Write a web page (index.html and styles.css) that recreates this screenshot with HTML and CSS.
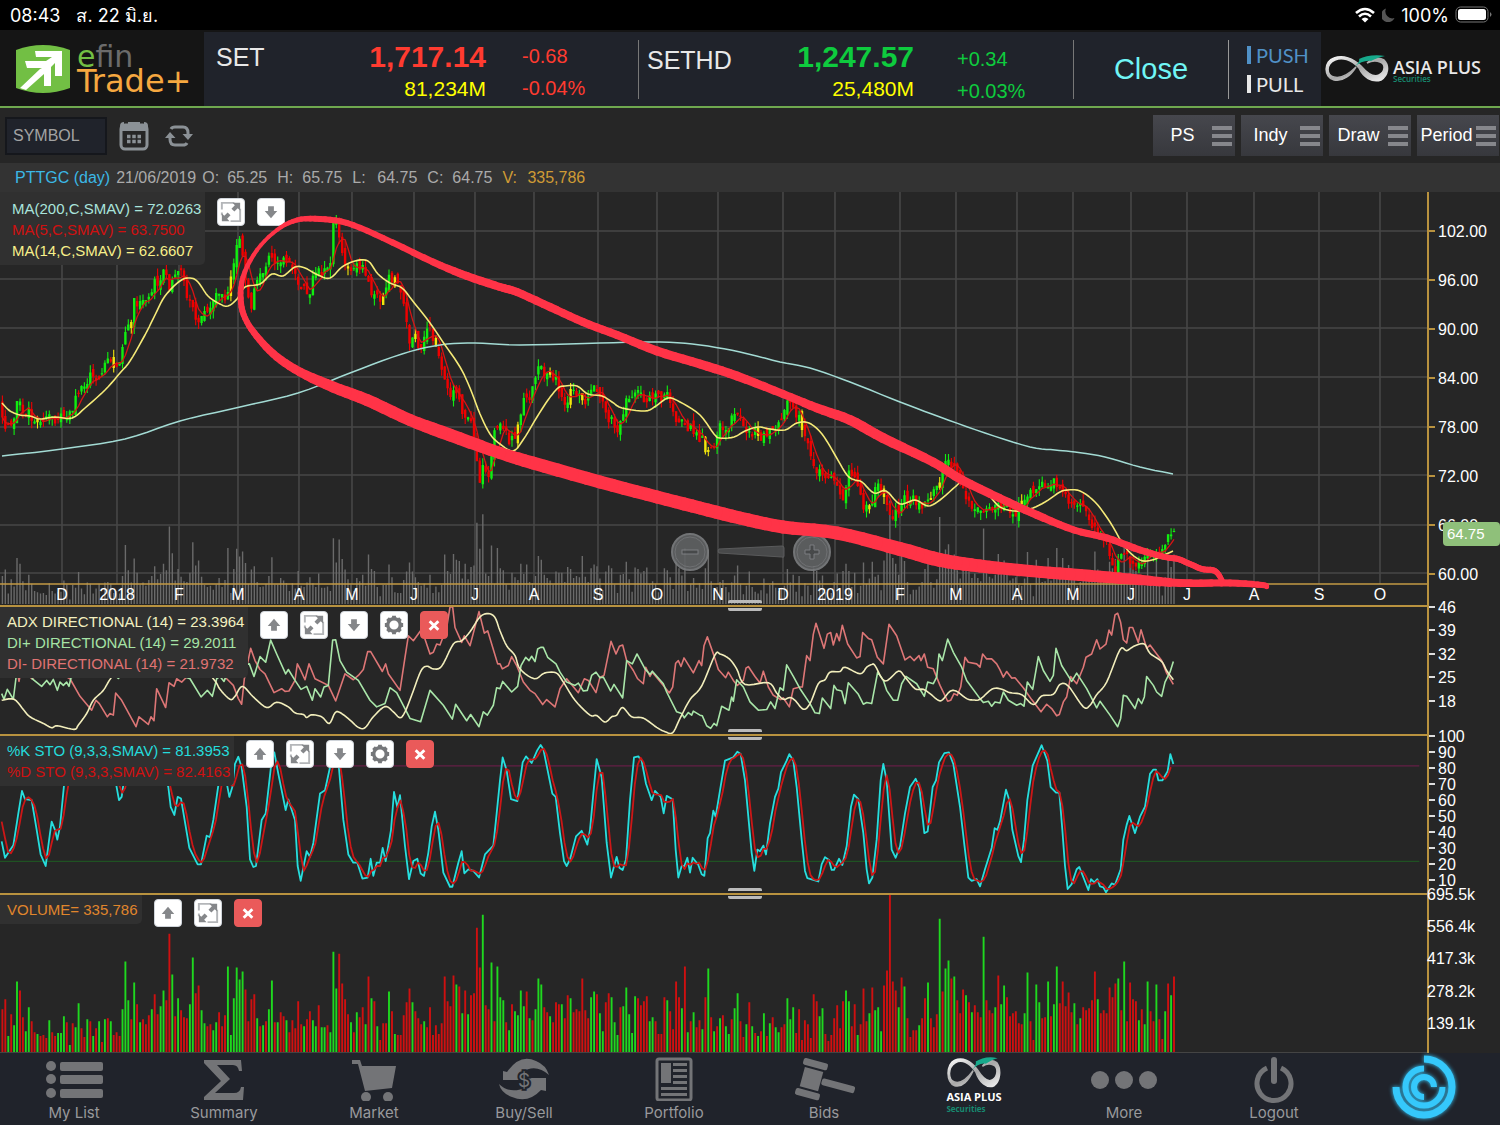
FILE: index.html
```html
<!DOCTYPE html>
<html lang="th">
<head>
  <meta charset="UTF-8">
  <meta name="viewport" content="width=device-width, initial-scale=1.0">
  <title>efin Trade+</title>
  <link rel="stylesheet" href="styles.css">
</head>
<body>
  <svg class="sprite" aria-hidden="true">
    <defs>
      <linearGradient id="silver" x1="0" y1="0" x2="1" y2="1">
        <stop offset="0" stop-color="#ffffff"/>
        <stop offset="0.5" stop-color="#a8a8a8"/>
        <stop offset="1" stop-color="#f2f2f2"/>
      </linearGradient>
    </defs>
    <symbol id="i-up" viewBox="0 0 27 27"><path d="M13.500 7L20 14.500H16.500V19.500H10.500V14.500H7z" fill="#85878a"/></symbol>
    <symbol id="i-down" viewBox="0 0 27 27"><path d="M13.500 20L20 12.500H16.500V7.500H10.500V12.500H7z" fill="#85878a"/></symbol>
    <symbol id="i-expand" viewBox="0 0 27 27">
      <path d="M4 11V4H14M23 14V23H13M4 14V17M17 4H14M23 14V10" fill="none" stroke="#b4b6b9" stroke-width="2"/>
      <path d="M23 4V12L20.500 9.500 17 13 14 10 17.500 6.500 15 4zM4 23V15L6.500 17.500 10 14 13 17 9.500 20.500 12 23z" fill="#85878a"/>
    </symbol>
    <symbol id="i-gear" viewBox="0 0 27 27">
      <circle cx="13.500" cy="13.500" r="6.500" fill="none" stroke="#75777a" stroke-width="3.500"/>
      <path d="M13.500 4V7M13.500 20V23M4 13.500H7M20 13.500H23M6.800 6.800L9 9M18 18L20.200 20.200M20.200 6.800L18 9M9 18L6.800 20.200" stroke="#75777a" stroke-width="4"/>
    </symbol>
    <symbol id="i-close" viewBox="0 0 27 27"><path d="M9 9.500L18 18.500M18 9.500L9 18.500" stroke="#fff" stroke-width="3"/></symbol>
    <symbol id="i-asia" viewBox="0 0 64 28">
      <path d="M34 13C26 4 17 2 10 5C1 9 1 20 9 22C17 24 24 19 31 12C26 20 18 27 9 25C-2 22-1 6 9 3C18 0 28 3 36 11C42 18 48 23 54 20C60 17 61 9 55 7C50 5 46 6 42 8C47 3 54 2 59 5C65 11 63 21 56 25C47 28 38 22 34 13z" fill="url(#silver)" stroke="url(#silver)" stroke-width="1.500"/>
      <path d="M29 12C33 9 35 6 34 4C40 1 50-1 60 1C54 2 50 4 46 6C41 5 35 7 29 12z" fill="#17a98b"/>
    </symbol>
  </svg>

  <div class="status-bar">
    <div class="status-left"><span>08:43</span><span class="date">ส. 22 มิ.ย.</span></div>
    <div class="status-right">
      <svg width="22" height="16" viewBox="0 0 22 16"><path d="M2 6Q11-2 20 6M5 9.500Q11 4 17 9.500" fill="none" stroke="#fff" stroke-width="2.600"/><path d="M7.500 12Q11 9 14.500 12L11 15.500z" fill="#fff"/></svg>
      <svg width="13" height="14" viewBox="0 0 13 14"><path d="M4 0.500A7 7 0 1 0 12.500 10A7 7 0 0 1 4 0.500z" fill="#555"/></svg>
      <span>100%</span>
      <svg width="37" height="18" viewBox="0 0 37 18"><rect x="1" y="1" width="32" height="15" rx="4.500" fill="none" stroke="#777"/><rect x="3" y="3" width="28" height="11" rx="2.500" fill="#fff"/><path d="M35 6Q38 8.500 35 11z" fill="#777"/></svg>
    </div>
  </div>

  <header class="top">
    <a class="brand" href="#">
      <svg width="54" height="48" viewBox="0 0 54 48">
        <path d="M0 5Q27-5 54 5V43Q27 53 0 43z" fill="#72bf44"/>
        <path d="M19 6H46V31H39V18L35 22V41H28V29L10 45L4 43L24 24L26 23H11L9 16H30L36 12H20z" fill="#fff"/>
      </svg>
      <span class="brand-name"><span><b>e</b>fin</span><em>Trade+</em></span>
    </a>
    <section class="quote down">
      <h2>SET</h2>
      <div class="price"><strong>1,717.14</strong><span>81,234M</span></div>
      <div class="change"><span>-0.68</span><span>-0.04%</span></div>
    </section>
    <section class="quote up">
      <h2>SETHD</h2>
      <div class="price"><strong>1,247.57</strong><span>25,480M</span></div>
      <div class="change"><span>+0.34</span><span>+0.03%</span></div>
    </section>
    <div class="market-state">Close</div>
    <div class="feed"><button class="push">PUSH</button><button class="pull">PULL</button></div>
    <a class="broker" href="#">
      <svg width="64" height="28"><use href="#i-asia"/></svg>
      <span class="broker-name">ASIA PLUS<small>Securities</small></span>
    </a>
  </header>

  <div class="toolbar">
    <input class="symbol" type="text" placeholder="SYMBOL" aria-label="Symbol">
    <button class="tool" aria-label="Calendar">
      <svg width="30" height="30" viewBox="0 0 30 30"><rect x="2" y="4" width="26" height="24" rx="4" fill="none" stroke="#8b9196" stroke-width="3"/><path d="M1 10V5Q1 1 5 1V5H9V1H21V5H25V1Q29 1 29 5V10z" fill="#8b9196"/><path d="M8 15.500H22M8 20.500H22" stroke="#8b9196" stroke-width="3.500" stroke-dasharray="3.500 1.750"/></svg>
    </button>
    <button class="tool" aria-label="Refresh">
      <svg width="28" height="22" viewBox="0 0 28 22"><path d="M6 4Q7 2 10 2H18Q23 2 23 8V11M22 18Q21 20 18 20H10Q5 20 5 14V11" fill="none" stroke="#8b9196" stroke-width="3"/><path d="M17.500 9H28L23 15zM0 13H10.500L5 7z" fill="#8b9196"/></svg>
    </button>
    <div class="menus">
      <button class="menu"><span>PS</span><i></i></button>
      <button class="menu"><span>Indy</span><i></i></button>
      <button class="menu"><span>Draw</span><i></i></button>
      <button class="menu"><span>Period</span><i></i></button>
    </div>
  </div>

  <div class="info">
    <span class="ticker">PTTGC (day)</span><span>21/06/2019</span>
    <span class="ohlc"><b>O:</b><span>65.25</span></span>
    <span class="ohlc"><b>H:</b><span>65.75</span></span>
    <span class="ohlc"><b>L:</b><span>64.75</span></span>
    <span class="ohlc"><b>C:</b><span>64.75</span></span>
    <span class="ohlc volume"><b>V:</b><span>335,786</span></span>
  </div>

  <main class="charts">
    <section class="panel panel-price">
      <div class="plot">
        <svg class="canvas" id="price" viewBox="0 192 1427 413" preserveAspectRatio="none"></svg>
        <div class="months" id="months"></div>
        <div class="zoom">
          <button aria-label="Zoom out"><svg width="38" height="38" viewBox="0 0 38 38"><circle cx="19" cy="19" r="18" fill="#606264" stroke="#7b7d7f" stroke-width="2"/><circle cx="19" cy="19" r="15" fill="none" stroke="#77797b"/><rect x="11" y="17" width="16" height="4" fill="#4b4d4f" stroke="#85878a"/></svg></button>
          <svg width="68" height="14" viewBox="0 0 68 14"><path d="M2 4L65 1Q67 1 67 3V11Q67 13 65 12L2 8Q0 6 2 4z" fill="#4c4d4e" stroke="#606162"/></svg>
          <button aria-label="Zoom in"><svg width="38" height="38" viewBox="0 0 38 38"><circle cx="19" cy="19" r="18" fill="#606264" stroke="#7b7d7f" stroke-width="2"/><circle cx="19" cy="19" r="15" fill="none" stroke="#77797b"/><path d="M17 12H21V17H26V21H21V26H17V21H12V17H17z" fill="#4b4d4f" stroke="#85878a"/></svg></button>
        </div>
        <svg class="canvas marker" id="marker" viewBox="0 192 1427 413" preserveAspectRatio="none"></svg>
        <div class="panel-head">
          <ul class="legend wide"><li class="c-ma200">MA(200,C,SMAV) = 72.0263</li><li class="c-red">MA(5,C,SMAV) = 63.7500</li><li class="c-ma14">MA(14,C,SMAV) = 62.6607</li></ul>
          <button aria-label="Expand"><svg><use href="#i-expand"/></svg></button>
          <button aria-label="Move down"><svg><use href="#i-down"/></svg></button>
        </div>
        <button class="grip" aria-label="Resize"></button>
      </div>
      <div class="scale" id="scale-price"></div>
    </section>

    <section class="panel panel-adx">
      <div class="plot">
        <svg class="canvas" id="adx" viewBox="0 18 4281 384" preserveAspectRatio="none"></svg>
        <div class="panel-head">
          <ul class="legend"><li class="c-adx">ADX DIRECTIONAL (14) = 23.3964</li><li class="c-plus">DI+ DIRECTIONAL (14) = 29.2011</li><li class="c-minus">DI- DIRECTIONAL (14) = 21.9732</li></ul>
          <button aria-label="Move up"><svg><use href="#i-up"/></svg></button>
          <button aria-label="Expand"><svg><use href="#i-expand"/></svg></button>
          <button aria-label="Move down"><svg><use href="#i-down"/></svg></button>
          <button aria-label="Settings"><svg><use href="#i-gear"/></svg></button>
          <button class="close" aria-label="Close"><svg><use href="#i-close"/></svg></button>
        </div>
        <button class="grip" aria-label="Resize"></button>
      </div>
      <div class="scale" id="scale-adx"></div>
    </section>

    <section class="panel panel-sto">
      <div class="plot">
        <svg class="canvas" id="sto" viewBox="0 405 4281 477" preserveAspectRatio="none"></svg>
        <div class="panel-head">
          <ul class="legend"><li class="c-cyan">%K STO (9,3,3,SMAV) = 81.3953</li><li class="c-red">%D STO (9,3,3,SMAV) = 82.4163</li></ul>
          <button aria-label="Move up"><svg><use href="#i-up"/></svg></button>
          <button aria-label="Expand"><svg><use href="#i-expand"/></svg></button>
          <button aria-label="Move down"><svg><use href="#i-down"/></svg></button>
          <button aria-label="Settings"><svg><use href="#i-gear"/></svg></button>
          <button class="close" aria-label="Close"><svg><use href="#i-close"/></svg></button>
        </div>
        <button class="grip" aria-label="Resize"></button>
      </div>
      <div class="scale" id="scale-sto"></div>
    </section>

    <section class="panel panel-volume">
      <div class="plot">
        <svg class="canvas" id="volume" viewBox="0 0 1427 158" preserveAspectRatio="none"></svg>
        <div class="panel-head">
          <ul class="legend"><li class="c-orange">VOLUME= 335,786</li></ul>
          <button aria-label="Move up"><svg><use href="#i-up"/></svg></button>
          <button aria-label="Expand"><svg><use href="#i-expand"/></svg></button>
          <button class="close" aria-label="Close"><svg><use href="#i-close"/></svg></button>
        </div>
      </div>
      <div class="scale flush" id="scale-volume"></div>
    </section>
  </main>

  <nav class="tabs">
    <a href="#">
      <svg width="58" height="44" viewBox="0 0 58 44" fill="#737477"><circle cx="6" cy="9" r="5"/><circle cx="6" cy="22" r="5"/><circle cx="6" cy="36" r="5"/><rect x="15" y="5" width="43" height="9" rx="2"/><rect x="15" y="18" width="43" height="9" rx="2"/><rect x="15" y="32" width="43" height="9" rx="2"/></svg>
      <span>My List</span>
    </a>
    <a href="#">
      <svg width="42" height="44" viewBox="0 0 42 44"><path d="M1 3H38L39 14H36Q35 8 30 8H14L27 22L12 36H31Q37 36 38 30H41L40 43H1V40L18 24L1 6z" fill="#737477"/></svg>
      <span>Summary</span>
    </a>
    <a href="#">
      <svg width="46" height="44" viewBox="0 0 46 44" fill="#737477"><path d="M1 3H9L11 9H45L41 31L14 34L7 7H1z"/><circle cx="15" cy="40" r="5"/><circle cx="37" cy="40" r="5"/></svg>
      <span>Market</span>
    </a>
    <a href="#">
      <svg width="52" height="44" viewBox="0 0 52 44" fill="#737477"><path d="M5 14L9 15Q22-4 38 4Q48 8 51 18Q38 6 24 15L27 23H5z"/><path d="M1 27Q12 38 29 30L26 21H48V34L43 33Q30 47 14 40Q3 36 1 27z"/><text x="26" y="30" text-anchor="middle" class="dollar">$</text></svg>
      <span>Buy/Sell</span>
    </a>
    <a href="#">
      <svg width="38" height="44" viewBox="0 0 38 44"><rect x="2" y="2" width="34" height="41" rx="2" fill="none" stroke="#737477" stroke-width="3"/><rect x="6" y="6" width="10" height="20" fill="#737477"/><path d="M18 7.500H32M18 13.500H32M18 19.500H32M18 25.500H32M6 31.500H32M6 37.500H32" stroke="#737477" stroke-width="3"/></svg>
      <span>Portfolio</span>
    </a>
    <a href="#">
      <svg width="62" height="44" viewBox="0 0 62 44" fill="#737477"><g transform="rotate(15 18 22)"><rect x="6" y="3" width="25" height="7" rx="2"/><rect x="9" y="12" width="19" height="20"/><rect x="6" y="34" width="25" height="7" rx="2"/><rect x="29" y="18" width="34" height="7" rx="2"/></g></svg>
      <span>Bids</span>
    </a>
    <a class="asia" href="#">
      <svg width="54" height="32" viewBox="0 0 64 28" preserveAspectRatio="none"><use href="#i-asia" width="64" height="28"/></svg>
      <strong>ASIA PLUS<small>Securities</small></strong>
    </a>
    <a href="#">
      <svg width="66" height="44" viewBox="0 0 66 44" fill="#737477"><circle cx="9" cy="23" r="9"/><circle cx="33" cy="23" r="9"/><circle cx="57" cy="23" r="9"/></svg>
      <span>More</span>
    </a>
    <a href="#">
      <svg width="40" height="46" viewBox="0 0 40 46" fill="none" stroke="#737477"><path d="M13 11A17 17 0 1 0 27 11" stroke-width="5"/><path d="M20 3V24" stroke-width="6" stroke-linecap="round"/></svg>
      <span>Logout</span>
    </a>
    <a class="orb" href="#" aria-label="Assistant">
      <svg width="66" height="66" viewBox="0 0 66 66" fill="none" stroke="#35c8fb"><path d="M33 5A28 28 0 1 1 5 33" stroke-width="7"/><path d="M33 14.500A18.500 18.500 0 1 0 51.500 33" stroke-width="6"/><path d="M43 33A10 10 0 1 0 33 43" stroke-width="6"/></svg>
    </a>
  </nav>

  <script src="chart.js"></script>
</body>
</html>
```
FILE: styles.css
```css
* {
  box-sizing: border-box;
}

body {
  margin: 0;
  min-height: 100vh;
  display: flex;
  flex-direction: column;
  background: #262626;
  color: #e8e8e8;
  font-family: "Liberation Sans", Arial, sans-serif;
  font-size: 16px;
}

button {
  padding: 0;
  border: 0;
  background: none;
  color: inherit;
  font: inherit;
  cursor: pointer;
}

a {
  color: inherit;
  text-decoration: none;
}

svg {
  display: block;
}

.sprite {
  position: absolute;
  width: 0;
  height: 0;
}

/* status bar */
.status-bar {
  display: flex;
  justify-content: space-between;
  align-items: center;
  height: 30px;
  padding: 0 8px 0 10px;
  background: #000;
  color: #fff;
  font-family: Inter, "Noto Sans", sans-serif;
  font-size: 18px;
}

.status-left {
  display: flex;
  align-items: center;
  gap: 16px;
}

.date {
  font-size: 18px;
}

.status-right {
  display: flex;
  align-items: center;
  gap: 6px;
}

/* header */
.top {
  display: grid;
  grid-template-columns: 204px 1fr 1fr 155px 92px 179px;
  grid-template-rows: 100%;
  height: 78px;
  border-top: 2px solid #151515;
  border-bottom: 2px solid #6fa84f;
  background: #20232b;
}

.brand {
  display: flex;
  align-items: center;
  gap: 7px;
  padding-left: 16px;
  background: #151515;
}

.brand-name {
  display: flex;
  flex-direction: column;
  font-family: "DejaVu Sans", sans-serif;
  font-size: 30px;
  line-height: 24px;
  color: #6b6b6b;
}

.brand-name b {
  color: #72bf44;
  font-weight: 400;
}

.brand-name em {
  color: #f6a840;
  font-size: 32px;
  font-style: normal;
}

.quote {
  display: grid;
  grid-template-columns: 1fr auto 116px;
  column-gap: 36px;
  margin: 8px 0 7px;
  padding-left: 12px;
  border-right: 1px solid #777;
}

.quote.up {
  padding-left: 8px;
  column-gap: 43px;
}

.quote h2 {
  margin: 0;
  font-size: 25px;
  line-height: 34px;
  font-weight: 400;
}

.price {
  display: flex;
  flex-direction: column;
  align-items: flex-end;
  color: #ff0;
  font-size: 21px;
  line-height: 30px;
}

.price strong {
  font-size: 30px;
  line-height: 34px;
}

.change {
  display: flex;
  flex-direction: column;
  font-size: 20px;
  line-height: 32px;
}

.up h2,
.up .change {
  padding-top: 3px;
}

.down .change,
.down strong {
  color: #ff3b30;
}

.up .change,
.up strong {
  color: #0ecb3e;
}

.market-state {
  display: flex;
  align-items: center;
  justify-content: center;
  margin: 8px 0 7px;
  border-right: 1px solid #999;
  color: #70f5f5;
  font-size: 29px;
}

.feed {
  display: flex;
  flex-direction: column;
  align-items: flex-start;
  justify-content: center;
  gap: 11px;
  padding-left: 18px;
  font-family: Lato, sans-serif;
  font-size: 20px;
  line-height: 18px;
}

.feed button {
  padding-left: 5px;
  border-left: 4px solid;
}

.push {
  color: #5091c7;
}

.broker {
  display: flex;
  align-items: center;
  gap: 4px;
  padding-left: 4px;
  background: #151515;
}

.broker-name {
  padding-top: 4px;
  font-family: "Open Sans", sans-serif;
  font-size: 18px;
  font-weight: 600;
  line-height: 16px;
  white-space: nowrap;
}

small {
  display: block;
  color: #178a70;
  font-size: 8px;
  line-height: 8px;
}

/* toolbar */
.toolbar {
  display: flex;
  align-items: center;
  gap: 12px;
  height: 55px;
  padding: 0 1px 0 5px;
  background: #262626;
}

.symbol {
  width: 102px;
  height: 38px;
  padding: 0 6px;
  border: 2px solid #15171c;
  background: #20232b;
  color: #ccc;
  font: 16px "Liberation Sans", Arial, sans-serif;
}

.symbol::placeholder {
  color: #a3a3a3;
}

.tool {
  margin-right: 4px;
}

.menus {
  display: flex;
  gap: 6px;
  margin-left: auto;
}

.menu {
  display: flex;
  align-items: center;
  width: 82px;
  height: 41px;
  padding-right: 3px;
  background: linear-gradient(#46474d, #37383d);
  color: #fff;
  font-size: 18px;
}

.menu span {
  flex: 1;
}

.menu i {
  width: 20px;
  height: 20px;
  background: repeating-linear-gradient(#86878c 0 4px, transparent 4px 8px);
}

.info {
  display: flex;
  align-items: center;
  gap: 6px;
  height: 29px;
  padding-left: 15px;
  background: #333;
  color: #aaa;
}

.ohlc {
  display: flex;
  gap: 9px;
  margin-right: 4px;
}

.ohlc b {
  width: 16px;
  font-weight: 400;
}

.ticker {
  color: #3bb8e6;
}

.volume {
  color: #cf9b35;
}

/* charts */
.charts {
  flex: 1;
  display: flex;
  flex-direction: column;
}

.panel {
  display: flex;
  min-height: 80px;
}

.panel-price {
  flex: 415 1 0;
}

.panel-adx {
  flex: 129 1 0;
}

.panel-sto {
  flex: 159 1 0;
}

.panel-volume {
  flex: 158 1 0;
}

.plot {
  position: relative;
  flex: 1;
  border-bottom: 2px solid #b8923f;
}

.panel-volume .plot {
  border-bottom-color: #444;
  border-bottom-width: 1px;
}

.canvas {
  position: absolute;
  inset: 0;
  width: 100%;
  height: 100%;
}

.canvas path {
  vector-effect: non-scaling-stroke;
}

.marker {
  overflow: visible;
  z-index: 1;
  pointer-events: none;
}

.panel-head {
  position: absolute;
  top: 0;
  left: 0;
  display: flex;
  align-items: flex-start;
  gap: 12px;
}

.panel-head button {
  width: 28px;
  height: 28px;
  margin-top: 4px;
  border-radius: 4px;
  background: #fff;
  border: 1px solid #cfd4da;
}

.panel-head button svg {
  width: 26px;
  height: 26px;
}

.panel-head .close {
  background: #ea5a5a;
  border-color: #ea5a5a;
}

.legend {
  margin: 0;
  padding: 4px 4px 4px 7px;
  border-radius: 0 0 5px 0;
  background: #303030;
  font-size: 15px;
  line-height: 21px;
  list-style: none;
}

.legend.wide {
  padding: 6px 4px 4px 12px;
}

.legend.wide ~ button {
  margin-top: 6px;
}

.c-ma200 { color: #a9e4dc; }
.c-ma14 { color: #f7ef8a; }
.c-red { color: #d01010; }
.c-adx { color: #f3f0c0; }
.c-plus { color: #a6e3a6; }
.c-minus { color: #e07373; }
.c-cyan { color: #25dcdc; }
.c-orange { color: #e0862c; }

.months {
  position: absolute;
  left: 0;
  right: 0;
  bottom: 0;
  height: 20px;
  line-height: 20px;
  color: #fff;
}

.months span {
  position: absolute;
  transform: translateX(-50%);
}

.zoom {
  position: absolute;
  left: 47%;
  bottom: 34px;
  display: flex;
  align-items: center;
  gap: 8px;
  opacity: 0.9;
}

.grip {
  position: absolute;
  left: 51%;
  bottom: -6px;
  width: 34px;
  height: 11px;
  border-top: 3px solid #bbb;
  border-bottom: 3px solid #bbb;
  border-radius: 2px;
  z-index: 2;
}

.scale {
  position: relative;
  width: 73px;
  border-left: 2px solid #b8923f;
  color: #fff;
}

.scale span {
  position: absolute;
  left: 9px;
  line-height: 18px;
  transform: translateY(-50%);
}

.scale span::before {
  content: "";
  position: absolute;
  top: 7px;
  left: -9px;
  width: 6px;
  height: 2px;
  background: #ddd;
}

#scale-price span::before {
  background: #b8923f;
}

.scale.flush span {
  left: -2px;
}

.scale.flush span::before {
  display: none;
}

.scale .last {
  left: 14px;
  right: 0;
  padding-left: 4px;
  border-radius: 4px;
  background: #8fc07a;
  font-size: 15px;
  line-height: 24px;
}

.scale .last::before {
  display: none;
}

/* bottom tabs */
.tabs {
  display: grid;
  grid-template-columns: repeat(10, 1fr);
  height: 72px;
  background: #20232b;
  color: #98999c;
  font-family: Inter, sans-serif;
  font-size: 15px;
}

.tabs a {
  display: flex;
  flex-direction: column;
  align-items: center;
  justify-content: space-between;
  padding: 4px 2px 3px 0;
}

.dollar {
  font-size: 19px;
  stroke: #20232b;
  stroke-width: 4px;
  paint-order: stroke;
}

.tabs .asia {
  justify-content: flex-start;
}

.asia strong {
  color: #fff;
  font: 700 11px/16px "Open Sans", sans-serif;
}

.tabs .orb {
  padding-top: 1px;
  filter: drop-shadow(0 0 2px #35c8fb);
}
```
FILE: chart.js
```js
// [r/g][height] per trading day
const VOLUME = `r43 r53 g16 r38 g27 g71 r62 r35 g21 g45 r31 r20 g18 r16 r17 r14 g32 r20 r16 g19 g19 g36 r30 g7 r29 g25 g49 r24 r15 g33 r31 g16 r24 g31 r10 g33 r34 g31 r17 r20
r16 g43 g91 g52 r33 g70 r48 g30 r33 r28 r37 g43 r58 r38 g46 g62 r52 r119 g78 r36 g54 r42 r35 r34 g48 g95 r59 r67 g42 g29 r26 r28 g22 g30 r40 r26 r37 g86 g17 g54
g85 g73 g81 r63 r31 r53 r58 g34 r26 g27 r31 g43 g72 r30 g30 r40 r36 g32 r20 r32 r24 r51 r28 g26 r33 r41 g32 g26 r47 g25 g25 r27 g20 g101 g64 r99 r69 r53 r38 g30
r20 g40 r35 r45 g28 r76 g54 r51 g26 r12 r29 r29 g61 r41 g18 r17 r17 r37 r50 r64 g50 r41 r34 r28 g31 r25 r45 r17 r27 r18 r29 r76 r51 r46 r77 g68 r66 g39 r62 g38
r57 r59 r125 r85 g138 r47 r43 g90 r31 g86 g55 g52 r30 g22 r48 g41 g37 g62 g46 r61 g34 r32 g43 g74 g68 r45 r40 g36 r30 r50 r48 g48 r34 r57 g54 r40 r43 r41 r74 r42
r34 g55 g61 r58 g39 g21 r50 r59 g55 g30 g17 r45 g46 g65 g38 g19 g56 r54 r47 r51 r56 g31 g35 r31 r18 r18 r55 g52 r41 r23 r71 r55 g44 r86 g20 r31 g40 r25 r32 g23
r55 g84 r35 g21 r26 g34 r37 g26 g18 r33 g44 g59 r31 r15 g28 r50 g26 r19 g16 r21 g39 r16 g29 r35 g25 g20 r25 r28 g54 g33 g45 r19 r43 r12 r32 r28 r14 r58 r51 g36
g44 r18 r11 r17 r34 r47 r24 r51 g62 g51 r26 r48 g17 r28 r64 r31 g39 r65 g42 g45 g21 r67 r82 r159 r71 r62 g45 r75 g66 r34 r15 r22 r22 g27 r34 r54 g70 r34 r25 r38
g134 r61 g84 g92 r74 g76 r52 r39 r63 g57 r50 g40 r47 r40 r35 g116 r52 r42 r39 g45 r77 g48 g67 r55 r36 r39 r41 r29 r28 g39 g80 r31 r12 g68 g50 r34 r35 g71 r36 g48
g86 r49 r71 r46 r60 r40 g49 r28 g34 r45 r42 r44 r52 r81 g53 r39 r42 r39 r65 r55 r69 g74 r42 g91 r31 r70 r53 r51 g32 r43 g28 g71 r41 r31 g68 r33 r13 g41 r69 g57 r76`;

const PRICE = `2,412 4,428 8,424 12,430 15,408 19,400 24,412 28,408 33,420 40,420 47,414 55,422 62,417 70,414 74,404 78,392 85,384 90,376 97,380 104,368 109,358 114,368 119,368
122,350 126,330 131,326 134,302 138,310 143,297 150,295 155,280 160,288 163,268 168,282 171,290 174,272 178,273 183,274 187,298 192,308 196,318 200,330 203,312 209,312 213,302 218,292 225,300
232,275 235,250 239,240 242,254 246,280 249,300 250,315 254,290 260,272 265,270 270,250 275,262 282,258 290,265 296,278 300,290 305,280 309,300 314,275 318,270 324,272 330,265 333,225 337,215
340,250 345,262 350,268 357,266 363,270 368,280 371,298 378,295 384,300 388,276 395,280 402,295 406,320 410,350 414,335 420,350 425,338 430,325 435,345 440,360 444,375 450,400 455,385 460,405
466,420 472,420 476,455 480,485 483,465 489,475 494,430 498,430 503,425 508,440 514,440 518,425 523,400 530,395 536,375 540,365 545,375 552,375 558,385 562,400 567,400 573,390 580,398 586,400
592,385 598,395 603,405 608,418 613,422 618,428 624,415 626,400 632,395 636,392 645,400 652,395 660,398 667,395 672,405 677,420 683,420 686,432 690,425 697,435 703,440 706,460 710,445 714,446
720,428 728,428 736,412 743,420 748,436 755,432 762,440 770,430 778,428 784,412 790,400 795,412 800,420 805,440 811,455 816,470 821,468 826,480 832,478 838,490 843,500 848,475 853,475 858,482
864,508 871,508 875,490 879,483 885,500 889,518 898,513 904,497 912,498 923,507 929,498 939,483 947,458 956,470 962,483 966,498 974,507 983,515 993,508 1003,507 1016,512 1026,498 1037,487
1041,483 1049,492 1055,480 1061,487 1070,502 1078,502 1086,513 1095,528 1107,545 1115,572 1124,550 1132,567 1140,563 1148,550 1155,550 1163,550 1169,537 1173,528`;

const MA14 = `2,403 10,411 20,415 30,416 40,419 55,417 72,418 85,408 105,390 120,373 130,361 145,335 155,315 165,296 180,281 190,278 198,282 208,296 220,304 228,306 237,299 245,287 260,284 272,274
283,276 295,267 305,268 318,275 330,278 342,267 355,261 368,261 378,274 390,283 402,288 412,300 430,323 445,345 460,367 470,388 480,414 490,434 500,444 513,451 523,440 537,417 548,400 558,388
565,386 577,386 588,394 602,396 612,402 622,408 645,411 656,406 668,398 680,402 700,415 714,434 720,438 734,437 745,431 758,427 770,429 785,430 797,423 809,423 822,434 835,455 847,475 855,480
862,482 874,493 886,491 900,504 915,500 928,506 940,500 955,487 962,482 972,486 988,495 1000,507 1015,511 1030,509 1045,502 1060,492 1068,490 1080,491 1095,502 1110,522 1125,547 1140,560 1152,560 1162,556 1173,551`;

const MA200 = `2,456 62,449 125,439 180,421 240,407 298,393 350,373 402,354 440,345 475,343 520,345 600,343 660,342 700,345 740,352 780,362 810,368 850,382 900,402 940,417 985,433 1030,447 1055,450 1075,452 1105,457 1140,467 1173,474`;

// hand drawn loop: x, y, pen width
const LOOP = [[1267,587,4],[1262,585,6],[1230,583,7],[1180,583,8],[1130,579,11],[1080,575,12],[1030,571,12],[980,566,13],[940,560,14],[900,549,14],[837,533,13],[783,527,13],[740,518,13],[700,508,13],[657,497,13],[600,482,13],[533,463,13],[500,453,12],[450,435,13],[410,420,12],[367,400,12],[333,387,11],[300,372,9],[277,357,8],[260,340,7],[247,322,6],[241,303,6],[243,277,5],[257,250,4],[277,230,4],[297,220,5],[320,219,6],[347,223,6],[383,238,6],[433,262,7],[467,276,8],[500,287,8],[517,292,8],[550,307,8],[583,322,8],[617,335,8],[657,351,9],[700,364,9],[737,376,9],[783,394,8],[817,408,9],[850,420,10],[883,438,10],[933,462,9],[962,480,9],[1008,502,8],[1037,515,8],[1074,530,7],[1107,538,7],[1140,550,7],[1165,557,6],[1178,559,6],[1190,564,6],[1202,569,6],[1215,571,6],[1222,580,5]];

const ADX = `5,300 42,297 70,328 90,350 130,370 155,383 172,377 222,388 235,375 260,340 280,300 310,270 335,230 400,150 560,150 640,235 660,267 690,297 705,288 727,258 760,290 800,322 830,306 865,320 885,338 910,343 920,352 935,344 965,350 988,370 1005,338 1020,337 1050,360 1075,382 1095,383 1120,350 1155,319 1180,335 1200,353 1215,335 1235,285 1262,213 1280,197 1300,205 1325,197 1360,130 1385,120 1410,93 1440,48 1465,38 1485,50 1500,90
1520,135 1545,165 1560,205 1603,235 1633,218 1668,217 1690,245 1725,300 1770,345 1790,346 1815,366 1835,350 1850,345 1868,322 1895,350 1930,354 1970,382 1995,395 2018,398 2040,355 2070,298 2105,257 2145,163 2160,160 2188,175 2210,205 2235,252 2305,247 2330,278 2350,297 2370,292 2385,300 2410,327 2430,310 2455,250 2475,238 2490,215 2520,213 2535,200 2580,220 2600,200 2615,192 2625,195 2655,242 2695,212 2715,230 2745,265 2770,267 2790,280 2815,300 2828,298 2850,273 2870,273 2900,295 2920,299 2940,297 2975,267 3000,265
3030,277 3065,283 3100,313 3125,287 3160,282 3180,252 3205,257 3250,320 3270,315 3290,283 3320,245 3360,147 3380,150 3405,135 3433,130 3450,158 3485,183 3500,210 3520,238`;

const DI_PLUS = `5,280 12,297 22,267 40,297 48,232 70,180 97,235 125,258 140,240 150,253 160,237 172,270 180,245 190,255 200,245 207,258 213,232 300,200 345,225 355,234 365,225 500,210 570,235 603,290 622,270 637,288 650,235 660,228 672,243 690,200 748,190 762,228 780,168 797,185 812,118 830,160 857,220 865,207 885,240 903,267 920,258 937,300 945,265 962,290 972,260 985,255 998,118 1007,117 1020,180 1040,215 1075,240 1110,300 1130,320 1155,310 1170,262 1190,277 1230,355 1262,365 1290,270 1330,315 1357,357 1367,312 1400,362 1412,343 1437,380 1450,335 1462,345 1480,315 1490,262 1500,265
1508,243 1535,275 1553,258 1563,195 1577,170 1587,180 1595,167 1605,183 1613,145 1622,140 1630,140 1643,170 1668,190 1680,215 1700,245 1725,255 1735,248 1750,272 1762,270 1775,225 1788,215 1800,232 1810,230 1832,272 1842,252 1868,293 1880,180 1897,190 1911,160 1935,205 1950,222 1957,212 1990,250 2000,275 2030,335 2045,340 2053,353 2065,337 2075,345 2080,333 2100,345 2107,347 2120,377 2132,385 2142,370 2150,377 2165,318 2187,330 2195,290 2200,303 2210,238 2230,260 2250,305 2275,330 2300,328 2312,305 2325,325 2340,262 2350,270 2360,193 2380,228 2400,265 2430,310 2445,338 2458,340 2467,293 2492,325 2502,255 2510,268 2525,272 2535,310 2545,247 2575,282 2590,312 2600,307 2615,310 2633,215 2650,240 2660,270 2680,300 2693,300 2705,250 2718,228 2750,250 2773,288 2783,245 2800,250 2810,230 2817,160 2827,180 2843,115 2860,155 2885,200 2900,240 2940,295 2950,307 2965,303 2975,318 2985,305 3000,308
3010,275 3025,300 3050,315 3062,310 3072,318 3082,245 3098,267 3115,168 3130,210 3150,243 3160,225 3168,143 3185,195 3215,243 3230,218 3260,265 3290,323 3300,303 3330,345 3353,380 3362,355 3370,285 3380,288 3405,325 3415,295 3425,310 3433,290 3440,228 3460,255 3470,275 3485,288 3495,245 3510,215 3520,183`;

const DI_MINUS = `48,190 57,243 65,200 95,235 150,200 210,235 240,288 275,330 288,300 298,310 322,350 330,340 340,345 347,278 365,300 408,380 417,350 445,373 453,350 462,362 470,265 497,322 507,247 522,258 530,235 545,245 555,235 600,190 680,235 700,255 715,295 725,312 733,235 752,143 765,180 780,207 795,220 822,277 845,265 855,273 867,272 885,240 892,190 900,205 915,238 927,190 945,235 985,255 1007,302 1035,220 1060,238 1075,225 1090,207 1103,153 1112,153 1147,213 1157,190 1165,220 1200,270 1215,170 1225,105 1240,120 1265,85 1290,160 1300,155 1310,130 1320,133 1340,80 1350,18 1358,18 1365,80 1385,125 1393,105 1410,135 1437,32 1453,97 1463,90 1475,130 1493,190 1500,190
1507,205 1525,195 1535,168 1550,195 1570,245 1590,270 1605,280 1628,313 1640,298 1665,320 1680,265 1700,235 1735,277 1753,235 1765,240 1788,277 1800,230 1812,225 1833,122 1848,160 1858,137 1868,133 1880,180 1900,210 1913,235 1930,250 1937,200 1950,228 1957,215 1990,255 2008,278 2018,260 2027,188 2035,180 2043,198 2052,172 2080,217 2097,180 2105,195 2112,135 2122,108 2142,165 2155,207 2177,232 2185,215 2200,240 2212,255 2230,240 2238,203 2245,198 2265,228 2280,248 2290,212 2305,260 2320,285 2342,298 2350,293 2368,320 2380,265 2400,260 2407,260 2420,165 2430,180 2440,100 2448,67 2472,143 2482,100 2492,95 2500,133 2510,98 2518,120 2527,73 2543,130 2570,172 2580,168 2588,95 2605,113 2615,117 2632,170 2650,190 2667,70 2690,105 2715,178 2730,167 2742,180 2757,165 2763,180 2773,160 2783,200 2800,205 2820,255 2843,303 2852,300 2862,280 2872,285 2882,260 2895,170 2905,185 2930,190 2940,200 2948,160 2960,175 2975,175 2990,190 3000,208
3010,230 3020,213 3035,233 3045,232 3070,262 3095,298 3123,335 3140,312 3155,325 3170,347 3178,343 3190,305 3200,290 3212,228 3230,250 3250,200 3258,170 3275,160 3290,117 3300,145 3318,130 3327,88 3335,103 3345,42 3353,37 3362,65 3370,117 3380,127 3388,80 3398,80 3415,125 3423,87 3440,143 3450,133 3470,160 3485,180 3500,218 3520,252`;

const STO_K = `5,725 15,775 40,737 55,640 66,572 75,597 95,600 110,690 122,765 137,800 150,700 155,665 165,690 172,720 180,680 192,555 230,440 330,450 357,600 365,590 380,480 470,440 505,560 512,620 523,645 533,590 543,595 568,745 593,795 603,795 620,708 630,712 640,660 655,555 665,500 675,520 688,590 697,560 705,490 715,468 725,500 740,620 750,780 760,803 768,800 785,660 797,640 815,480 823,455 835,520 857,630 865,598 885,660 893,800 902,845 920,755 930,772 940,730 960,580 975,570 990,500 1000,450 1015,480 1030,660 1045,765 1060,790 1072,790 1087,838 1103,835 1112,778 1120,830 1130,790 1140,790 1148,745 1157,785 1173,690 1182,575 1192,622 1200,585 1215,740 1227,840 1240,785 1252,778 1262,823 1272,830 1285,760 1295,680 1305,635 1315,690 1330,820 1350,863 1357,863 1375,790 1385,755 1393,822 1405,810 1420,815 1437,835 1455,765 1480,738 1490,640 1500,540
1508,470 1520,510 1533,597 1552,603 1568,485 1578,467 1595,487 1612,448 1622,432 1630,445 1642,505 1657,580 1667,590 1680,700 1692,785 1700,800 1710,780 1728,710 1745,693 1762,735 1770,690 1780,580 1790,475 1805,530 1820,730 1833,835 1850,772 1858,805 1868,812 1878,780 1890,600 1902,470 1915,467 1925,480 1938,550 1955,600 1965,572 1982,590 1991,640 2000,587 2018,597 2027,750 2035,835 2045,800 2053,800 2062,775 2070,820 2078,775 2095,797 2105,825 2113,830 2123,715 2130,700 2140,632 2147,650 2160,570 2175,480 2200,470 2212,453 2222,460 2235,540 2245,650 2255,760 2263,815 2272,750 2280,755 2290,738 2298,765 2310,670 2325,590 2335,565 2343,515 2360,480 2368,460 2380,480 2390,560 2405,720 2415,815 2422,837 2455,847 2465,795 2475,773 2487,782 2495,812 2502,812 2517,778 2527,797 2540,740 2553,620 2562,583 2575,597 2590,700 2600,810 2607,853 2617,835 2630,720 2642,540 2650,490 2660,540 2675,750 2687,775 2700,740 2715,640 2730,560 2747,535 2758,560 2773,700 2783,695 2798,560 2808,540 2817,485 2833,457 2847,455 2860,490 2880,620 2893,735 2905,835 2915,845 2930,840 2940,862 2955,810 2975,745 2984,685 2992,690 3000,665
3018,568 3028,600 3037,690 3055,770 3063,788 3072,720 3082,600 3098,495 3125,433 3142,480 3152,560 3168,577 3178,577 3187,690 3195,800 3203,870 3215,855 3230,810 3238,803 3265,873 3273,840 3283,850 3292,840 3300,862 3310,865 3318,880 3335,853 3345,857 3362,810 3370,720 3380,675 3388,648 3405,700 3420,650 3435,620 3450,520 3460,507 3468,507 3475,540 3487,540 3503,512 3511,460 3520,490`;

const STEP = 2.929;
const START = 2.4;

const parse = text => text.trim().split(/\s+/).map(p => p.split(',').map(Number));
const toPath = points => 'M' + points.map(p => p[0].toFixed(1) + ' ' + p[1].toFixed(1)).join('L');

// Catmull-Rom, works on points of any dimension
function smooth(points) {
  const out = [];
  for (let i = 0; i < points.length - 1; i++) {
    const p0 = points[Math.max(0, i - 1)];
    const p1 = points[i];
    const p2 = points[i + 1];
    const p3 = points[Math.min(points.length - 1, i + 2)];
    for (let s = 0; s < 5; s++) {
      const t = s / 5;
      out.push(p1.map((v, n) => 0.5 * (2 * v + (p2[n] - p0[n]) * t + (2 * p0[n] - 5 * v + 4 * p2[n] - p3[n]) * t * t + (3 * v - p0[n] - 3 * p2[n] + p3[n]) * t * t * t)));
    }
  }
  out.push(points[points.length - 1]);
  return out;
}

function draw(id, d, color, width) {
  const path = document.createElementNS('http://www.w3.org/2000/svg', 'path');
  path.setAttribute('d', d);
  path.setAttribute('fill', 'none');
  path.setAttribute('stroke', color);
  path.setAttribute('stroke-width', width);
  path.setAttribute('stroke-linejoin', 'round');
  document.getElementById(id).appendChild(path);
  return path;
}

function valueAt(points, x) {
  if (x <= points[0][0]) return points[0][1];
  for (let i = 1; i < points.length; i++) {
    if (x <= points[i][0]) {
      const [x0, y0] = points[i - 1];
      const [x1, y1] = points[i];
      return y0 + (y1 - y0) * (x - x0) / (x1 - x0);
    }
  }
  return points[points.length - 1][1];
}

function noise(n) {
  const s = Math.sin(n * 127.1 + 11.7) * 43758.5453;
  return s - Math.floor(s);
}

const days = VOLUME.trim().split(/\s+/).map(v => ({ up: v[0] === 'g', size: Number(v.slice(1)) }));
const monthLines = [[62, 'D'], [117, '2018'], [179, 'F'], [238, 'M'], [299, 'A'], [352, 'M'], [414, 'J'], [475, 'J'], [534, 'A'], [598, 'S'], [657, 'O'], [718, 'N'], [783, 'D'], [835, '2019'], [900, 'F'], [956, 'M'], [1017, 'A'], [1073, 'M'], [1131, 'J'], [1187, 'J'], [1254, 'A'], [1319, 'S'], [1380, 'O']];

// price panel: grid, volume shadow, candles, averages
let grid = '';
[231, 279, 328, 377, 427, 475, 525, 573].forEach(y => { grid += `M0 ${y}H1427`; });
monthLines.forEach(m => { grid += `M${m[0]} 192V584`; });
draw('price', grid, '#474747', 1.6);

let shadow = '';
days.forEach((d, i) => { shadow += `M${(START + i * STEP).toFixed(1)} 604v${-(d.size * 0.65).toFixed(1)}`; });
draw('price', shadow, '#6a6a6a', 1.4);
draw('price', 'M0 584H1427', '#c39a45', 1.6);

const pricePoints = parse(PRICE);
const wicks = { g: '', r: '', y: '' };
const bodies = { g: '', r: '', y: '' };
const closes = [];
days.forEach((d, i) => {
  const x = START + i * STEP;
  const close = valueAt(pricePoints, x) + (noise(i) - 0.5) * 9;
  const open = i ? closes[i - 1] + (noise(i + 500) - 0.5) * 9 : 402;
  closes.push(close);
  let tone = close < open ? 'g' : 'r';
  if (noise(i + 900) > 0.93) tone = 'y';
  const high = Math.min(open, close) - noise(i + 200) * 8;
  const low = Math.max(open, close) + noise(i + 300) * 8;
  wicks[tone] += `M${x.toFixed(1)} ${high.toFixed(1)}V${low.toFixed(1)}`;
  bodies[tone] += `M${x.toFixed(1)} ${(Math.min(open, close) - 0.5).toFixed(1)}V${(Math.max(open, close) + 0.5).toFixed(1)}`;
});
const tones = { r: '#f00000', g: '#10ee10', y: '#f2e60c' };
Object.keys(tones).forEach(t => {
  draw('price', wicks[t], tones[t], 1.1);
  draw('price', bodies[t], tones[t], 2.4);
});

const ma5 = closes.map((c, i) => {
  const part = closes.slice(Math.max(0, i - 4), i + 1);
  return [START + i * STEP, part.reduce((a, b) => a + b) / part.length];
});
draw('price', toPath(ma5), '#d81414', 1.3);
draw('price', toPath(smooth(parse(MA200))), '#a3dbd4', 1.5);
draw('price', toPath(smooth(parse(MA14))), '#f5ea78', 1.6);

// marker stroke with varying width
const pen = smooth(LOOP);
pen.slice(1).forEach((p, i) => {
  const q = pen[i];
  const part = draw('marker', toPath([q, p]), '#ff3347', (p[2] + q[2]) / 2);
  part.setAttribute('stroke-linecap', 'round');
});

// indicators
draw('adx', toPath(parse(DI_MINUS)), '#dd7676', 1.6);
draw('adx', toPath(parse(DI_PLUS)), '#a9e6a9', 1.6);
draw('adx', toPath(smooth(parse(ADX))), '#f2eebc', 1.6);

const k = parse(STO_K);
const d3 = [[5, 665], [15, 715]];
for (let x = 24; x <= 3521; x += STEP * 3) {
  d3.push([x, (valueAt(k, x) + valueAt(k, x - 8.8) + valueAt(k, x - 17.6)) / 3]);
}
draw('sto', 'M0 496H4258', '#641f46', 1.3);
draw('sto', 'M0 786H4258', '#1f5222', 1.3);
draw('sto', toPath(k), '#26dede', 1.8);
draw('sto', toPath(d3), '#cc1717', 1.8);

// volume
let red = '';
let green = '';
days.forEach((d, i) => {
  const bar = `M${(START + i * STEP).toFixed(1)} 158v${-d.size}`;
  if (d.up) green += bar; else red += bar;
});
draw('volume', red, '#cf1010', 1.9);
draw('volume', green, '#1fd81f', 1.9);

// axis labels
function label(id, text, edge, position, name) {
  const span = document.createElement('span');
  span.textContent = text;
  span.style[edge] = position + '%';
  if (name) span.className = name;
  document.getElementById(id).appendChild(span);
}

monthLines.forEach(m => label('months', m[1], 'left', m[0] / 14.27));
for (let p = 102; p >= 60; p -= 6) label('scale-price', p.toFixed(2), 'top', (40 + (102 - p) * 8.16) / 4.15);
label('scale-price', '64.75', 'top', 342 / 4.15, 'last');
[46, 39, 32, 25, 18].forEach((v, i) => label('scale-adx', v, 'top', (1 + i * 23.4) / 1.29));
for (let v = 100; v >= 10; v -= 10) label('scale-sto', v, 'top', (1 + (100 - v) * 1.6) / 1.59);
['695.5k', '556.4k', '417.3k', '278.2k', '139.1k'].forEach((v, i) => label('scale-volume', v, 'top', i * 32.2 / 1.58));
```
